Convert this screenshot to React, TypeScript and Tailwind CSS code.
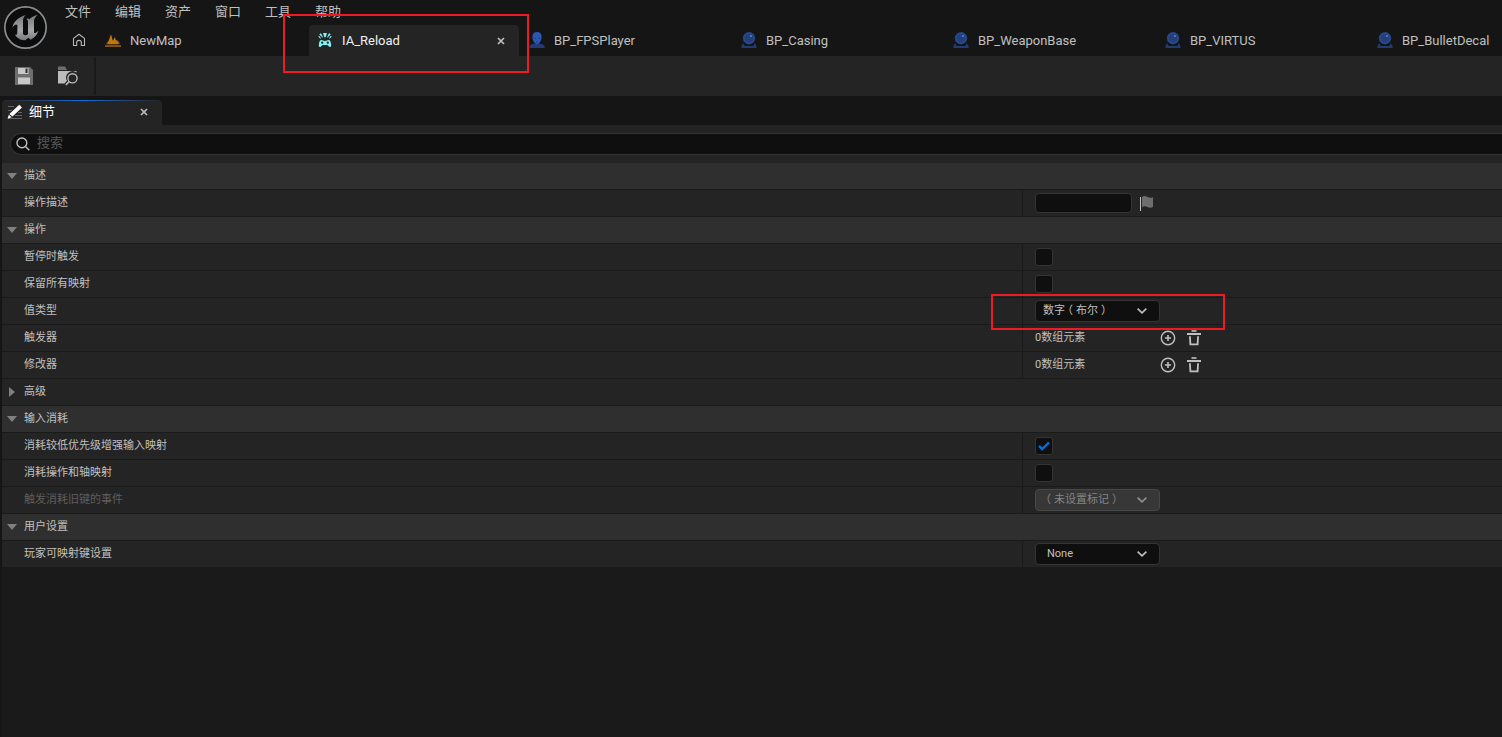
import React from 'react';

interface Tab {
  label: string;
  icon: React.ReactNode;
  active?: boolean;
}

interface Row {
  label: string;
  kind: 'category' | 'advanced' | 'property';
  disabled?: boolean;
  value?: React.ReactNode;
}

function UnrealLogo() {
  return (
    <svg width="46" height="46" viewBox="9 12 138 138">
      <defs>
        <linearGradient id="metal" x1="0" y1="0" x2="0" y2="1">
          <stop offset="0" stopColor="#77797b" />
          <stop offset="0.6" stopColor="#a4a7a9" />
          <stop offset="1" stopColor="#77797b" />
        </linearGradient>
      </defs>
      <circle cx="76.5" cy="82.5" r="62" fill="#0c0c0c" stroke="#8b8e90" strokeWidth="5" />
      <path
        d="M78 45C58 50 42 62 37 82c6-8 12-11 15-7 1 3 0 9 0 17 0 11-1 13-7 12 7 12 19 17 31 17l9-8 7 6c12-6 20-15 23-27-6 7-11 9-13 6V62c0-6 5-12 11-17-10 1-18 6-25 13-2-3-6-3-9-1 4 2 5 5 5 10v35c-4 5-12 5-15-1V61c0-7 4-12 9-16z"
        fill="url(#metal)"
      />
    </svg>
  );
}

function HomeIcon() {
  return (
    <svg width="14" height="14" viewBox="0 0 14 14" fill="none" stroke="#b8b8b8" strokeWidth="1.1" className="-mt-px">
      <path d="M1.5 5.4 7 1.2l5.500 4.200v7.100H9.300V9.400c0-1.200-1-2-2.300-2s-2.300.8-2.300 2v3.100H1.500z" strokeLinejoin="round" />
    </svg>
  );
}

function LevelIcon() {
  return (
    <svg width="16" height="16" viewBox="0 0 16 16" className="-mt-px">
      <path d="M.8 12 3.500 8.500V12zM12 12h3.200l-2-3.500z" fill="#7c4b0c" />
      <path d="M2.400 12.200 6 2.200l1.800 6.500 2.200-3.600.9 3.600 1.200-1 1.500 4.500z" fill="#c47a08" />
      <path d="M0 13h16v2H0z" fill="#875009" />
    </svg>
  );
}

function InputActionIcon() {
  return (
    <svg width="16" height="16" viewBox="0 0 16 16" fill="#7df3f2" className="-mt-px">
      <path d="M6 1h4L8.700 5.200H7.300zM2.200 2.200 4 1.200l2 4-.7.400zM13.800 2.200 12 1.200l-2 4 .7.400zM1.200 4.600l1-.8 1.800 2.400-.6.500zM14.800 4.600l-1-.8L12 6.200l.6.500z" />
      <path
        fillRule="evenodd"
        d="M4.600 8C3.200 8 2.700 8.800 2.300 10.300c-.5 1.900-.9 4.500.5 4.700 1.400.1 2-2 3.200-2h4c1.200 0 1.800 2.100 3.200 2 1.400-.2 1-2.800.5-4.700C13.300 8.800 12.800 8 11.400 8c-1.200 0-1.500.9-3.400.9S5.800 8 4.600 8zm.6 1.600a1.100 1.100 0 1 1 0 2.200 1.100 1.100 0 0 1 0-2.200zm5.600 0a1.100 1.100 0 1 1 0 2.200 1.100 1.100 0 0 1 0-2.200z"
      />
    </svg>
  );
}

function PawnIcon() {
  return (
    <svg width="16" height="16" viewBox="0 0 16 16" className="-mt-px">
      <path d="M.3 16c0-2.600 1.600-3.900 4.200-4.200h7C14.100 12.100 15.700 13.400 15.700 16z" fill="#213c75" />
      <path d="M8 0C5 0 3.300 1.900 3.400 4.700c0 2.300.6 4.100 1.900 5.800.8 1.100 1.700 1.700 2.700 1.700s1.900-.6 2.700-1.700c1.300-1.700 1.900-3.500 1.900-5.800C12.700 1.900 11 0 8 0z" fill="#2d57b4" />
      <path d="M5.200 5.800h1.500v1H5.500zM9.300 5.800h1.500l-.3 1H9.300zM7 9.500h2v.8H7z" fill="#1c3264" />
    </svg>
  );
}

function ActorIcon() {
  return (
    <svg width="16" height="16" viewBox="0 0 16 16" className="-mt-px">
      <path d="M2.300 11 .500 14v2h15v-2l-1.800-3L12.500 14h-9z" fill="#213c70" />
      <circle cx="8" cy="6.200" r="6.200" fill="#233b70" />
      <circle cx="8" cy="6.200" r="5.200" fill="#244078" stroke="#2b52a4" strokeWidth="0.900" />
      <rect x="9" y="3" width="2" height="2" fill="#3d74dc" />
    </svg>
  );
}

function SaveIcon() {
  return (
    <svg width="18" height="18" viewBox="0 0 18 18">
      <path d="M0 0h15l3 3v15H0z" fill="#6e6e6e" />
      <path d="M3 1h10.500v6H3zM3 10.500h12V17H3z" fill="#c8c8c8" />
      <path d="M10.500 1.500h2V6h-2z" fill="#303030" />
    </svg>
  );
}

function BrowseIcon() {
  return (
    <svg width="22" height="20" viewBox="0 0 22 20">
      <path d="M1 .500h7l2 3.500H1z" fill="#6e6e6e" />
      <path d="M1 5h18.500v1.500a6.400 6.400 0 0 0-9.500 8.200l-2.500 2.800H1z" fill="#bdbdbd" />
      <circle cx="15.500" cy="12.300" r="4.600" fill="none" stroke="#bdbdbd" strokeWidth="1.400" />
      <path d="m12.300 15.500-3.400 3.400" stroke="#bdbdbd" strokeWidth="1.700" />
    </svg>
  );
}

function DetailsIcon() {
  return (
    <svg width="16" height="16" viewBox="0 0 16 16" className="-mt-px">
      <path d="M1 2.500h6M1 6.500h4M11 8.500h4M8 11.500h7M1 14.500h14" stroke="#666" />
      <path d="M12.200.800 15 3.400 5.500 12.600 2.400 9.900zM1.800 10.800l2.900 2.500L.600 14.700z" fill="#fff" />
    </svg>
  );
}

function SearchIcon() {
  return (
    <svg width="14" height="14" viewBox="0 0 14 14" fill="none" stroke="#c0c0c0" strokeWidth="1.400">
      <circle cx="5.900" cy="5.900" r="4.900" />
      <path d="m9.500 9.500 3.800 3.800" />
    </svg>
  );
}

function CloseIcon() {
  return (
    <svg width="8" height="8" viewBox="0 0 8 8" stroke="#c0c0c0" strokeWidth="1.700">
      <path d="m1 1 6 6M7 1 1 7" />
    </svg>
  );
}

function FlagIcon() {
  return (
    <svg width="14" height="16" viewBox="0 0 14 16">
      <path d="M.500 2v14" stroke="#c0c0c0" />
      <path d="M2 2C4 .600 5.500 1 7.500 2s3.500 1 5.500.200v9.800c-2 .900-3.500.900-5.500 0s-3.500-1-5.500.300z" fill="#6e6e6e" />
    </svg>
  );
}

function AddIcon() {
  return (
    <svg width="16" height="16" viewBox="0 0 16 16" fill="none" stroke="#c0c0c0" strokeWidth="1.400">
      <circle cx="8" cy="8" r="6.700" />
      <path d="M8 5v6M5 8h6" strokeWidth="1.600" />
    </svg>
  );
}

function TrashIcon() {
  return (
    <svg width="14" height="16" viewBox="0 0 14 16" fill="none" stroke="#c0c0c0">
      <path d="M4.500 1h5" strokeWidth="1.600" />
      <path d="M0 4h14" strokeWidth="2" />
      <path d="m2.900 6.200.500 8.200h7.200l.500-8.200" strokeWidth="1.800" />
    </svg>
  );
}

function Checkbox({ checked = false }: { checked?: boolean }) {
  return (
    <div className="w-[18px] h-[18px] rounded-[3px] border border-[#343434] bg-[#0f0f0f] flex items-center justify-center">
      {checked && (
        <svg width="12" height="10" viewBox="0 0 12 10" fill="none" stroke="#0070e0" strokeWidth="2.400">
          <path d="m1 4.800 3.200 3.200L11 1.500" />
        </svg>
      )}
    </div>
  );
}

// bracketed text sits between full-width brackets that are centred in their cells
function Combo({ before = '', bracketed, label = '', disabled = false }: { before?: string; bracketed?: string; label?: string; disabled?: boolean }) {
  return (
    <div
      className={`w-[125px] h-[22px] rounded-[4px] border flex items-center justify-between pr-3 ${label ? 'pl-[11px]' : 'pl-[7px]'} ${
        disabled ? 'bg-[#373737] border-[#484848] text-[#858585]' : 'bg-[#0f0f0f] border-[#343434] text-[#c0c0c0]'
      }`}
    >
      {bracketed ? (
        <span className="flex h-4 leading-4 -mt-px">
          {before}
          <span className="-ml-[3px] mr-[3px]">（</span>
          {bracketed}
          <span className="ml-[3px]">）</span>
        </span>
      ) : (
        <span>{label}</span>
      )}
      <svg width="10" height="6" viewBox="0 0 10 6" fill="none" stroke={disabled ? '#909090' : '#c0c0c0'} strokeWidth="1.600">
        <path d="m.600.700 4.400 4.200L9.400.700" />
      </svg>
    </div>
  );
}

function ArrayValue() {
  return (
    <>
      <span className="w-[125px]">0数组元素</span>
      <AddIcon />
      <span className="ml-[11px]"><TrashIcon /></span>
    </>
  );
}

const menus = ['文件', '编辑', '资产', '窗口', '工具', '帮助'];

const tabs: Tab[] = [
  { label: 'NewMap', icon: <LevelIcon /> },
  { label: 'IA_Reload', icon: <InputActionIcon />, active: true },
  { label: 'BP_FPSPlayer', icon: <PawnIcon /> },
  { label: 'BP_Casing', icon: <ActorIcon /> },
  { label: 'BP_WeaponBase', icon: <ActorIcon /> },
  { label: 'BP_VIRTUS', icon: <ActorIcon /> },
  { label: 'BP_BulletDecal', icon: <ActorIcon /> },
];

const rows: Row[] = [
  { label: '描述', kind: 'category' },
  {
    label: '操作描述',
    kind: 'property',
    value: (
      <>
        <div className="w-[97px] h-5 rounded-[4px] border border-[#343434] bg-[#0f0f0f] mr-2" />
        <FlagIcon />
      </>
    ),
  },
  { label: '操作', kind: 'category' },
  { label: '暂停时触发', kind: 'property', value: <Checkbox /> },
  { label: '保留所有映射', kind: 'property', value: <Checkbox /> },
  { label: '值类型', kind: 'property', value: <Combo before="数字" bracketed="布尔" /> },
  { label: '触发器', kind: 'property', value: <ArrayValue /> },
  { label: '修改器', kind: 'property', value: <ArrayValue /> },
  { label: '高级', kind: 'advanced' },
  { label: '输入消耗', kind: 'category' },
  { label: '消耗较低优先级增强输入映射', kind: 'property', value: <Checkbox checked /> },
  { label: '消耗操作和轴映射', kind: 'property', value: <Checkbox /> },
  { label: '触发消耗旧键的事件', kind: 'property', disabled: true, value: <Combo bracketed="未设置标记" disabled /> },
  { label: '用户设置', kind: 'category' },
  { label: '玩家可映射键设置', kind: 'property', value: <Combo label="None" /> },
];

function DetailRow({ row }: { row: Row }) {
  if (row.kind !== 'property') {
    return (
      <div className={`h-[27px] border-b border-[#1a1a1a] flex items-center ${row.kind === 'category' ? 'bg-[#2f2f2f]' : 'bg-[#242424]'}`}>
        <svg width="12" height="12" viewBox="0 0 12 12" fill="#808080" className="ml-1 mr-1.5">
          {row.kind === 'category' ? <path d="M1 3h10L6 9z" /> : <path d="M3 1v10l6-5z" />}
        </svg>
        <span>{row.label}</span>
      </div>
    );
  }
  return (
    <div className="h-[27px] border-b border-[#1a1a1a] bg-[#242424] flex">
      <div className="w-[1021px] border-r border-[#1a1a1a] pl-[22px] flex items-center">
        <span className={row.disabled ? 'text-[#5e5e5e]' : ''}>{row.label}</span>
      </div>
      <div className="pl-3 flex items-center">{row.value}</div>
    </div>
  );
}

export default function App() {
  return (
    <div className="relative w-[1502px] h-[737px] overflow-hidden bg-[#151515] flex flex-col text-[#c0c0c0] text-[13px] font-[Roboto,'Noto_Sans_CJK_SC',sans-serif]">
      <header className="h-14 flex shrink-0">
        <div className="w-[65px] pl-[3px] pt-[4px] -mr-px"><UnrealLogo /></div>
        <div className="flex-1 min-w-0 flex flex-col">
          <nav className="h-[25px] flex pl-px">
            {menus.map((menu) => (
              <span key={menu} className="w-[50px] shrink-0 leading-[23px]">{menu}</span>
            ))}
          </nav>
          <div className="h-[31px] flex items-center">
            <span className="w-[33px] shrink-0 pl-2"><HomeIcon /></span>
            {tabs.map((tab) => (
              <div
                key={tab.label}
                className={`w-[210px] mr-0.5 h-[31px] shrink-0 flex items-center pl-2 rounded-t-[4px] ${tab.active ? 'bg-[#242424] text-[#f0f0f0]' : ''}`}
              >
                {tab.icon}
                <span className="ml-[9px] flex-1">{tab.label}</span>
                {tab.active && <span className="mr-3.5"><CloseIcon /></span>}
              </div>
            ))}
          </div>
        </div>
      </header>

      <div className="h-10 shrink-0 bg-[#242424] flex items-center">
        <div className="h-[38px] w-24 border-r-2 border-[#1a1a1a] flex items-center pl-[15px] gap-6">
          <SaveIcon />
          <BrowseIcon />
        </div>
      </div>

      <main className="flex-1 mt-1 ml-0.5 flex flex-col bg-[#1a1a1a] text-[11px] leading-4">
        <div className="h-[25px] bg-[#151515] flex">
          <div className="w-40 bg-[#242424] rounded-t-[4px] overflow-hidden flex flex-col">
            <div className="h-px bg-linear-to-r from-[#242424] via-[#0070e0] to-[#242424]" />
            <div className="flex-1 flex items-center pl-[5px] pr-3.5 pb-0.5 text-[13px] text-white">
              <DetailsIcon />
              <span className="ml-1.5 flex-1">细节</span>
              <CloseIcon />
            </div>
          </div>
        </div>
        <div className="h-[38px] bg-[#242424] pt-2 pl-2">
          <div className="h-[22px] rounded-l-full border border-r-0 border-[#343434] bg-[#0f0f0f] flex items-center pl-[5px] text-[13px] text-[#575757]">
            <SearchIcon />
            <span className="ml-[7px] -mt-0.5">搜索</span>
          </div>
        </div>
        {rows.map((row) => (
          <DetailRow key={row.label} row={row} />
        ))}
      </main>

      {/* callout frames drawn over the editor */}
      <div className="absolute left-[283px] top-[14px] w-[246px] h-[59px] border-2 border-[#ed1c24]" />
      <div className="absolute left-[991px] top-[294px] w-[234px] h-[36px] border-2 border-[#ed1c24]" />
    </div>
  );
}
